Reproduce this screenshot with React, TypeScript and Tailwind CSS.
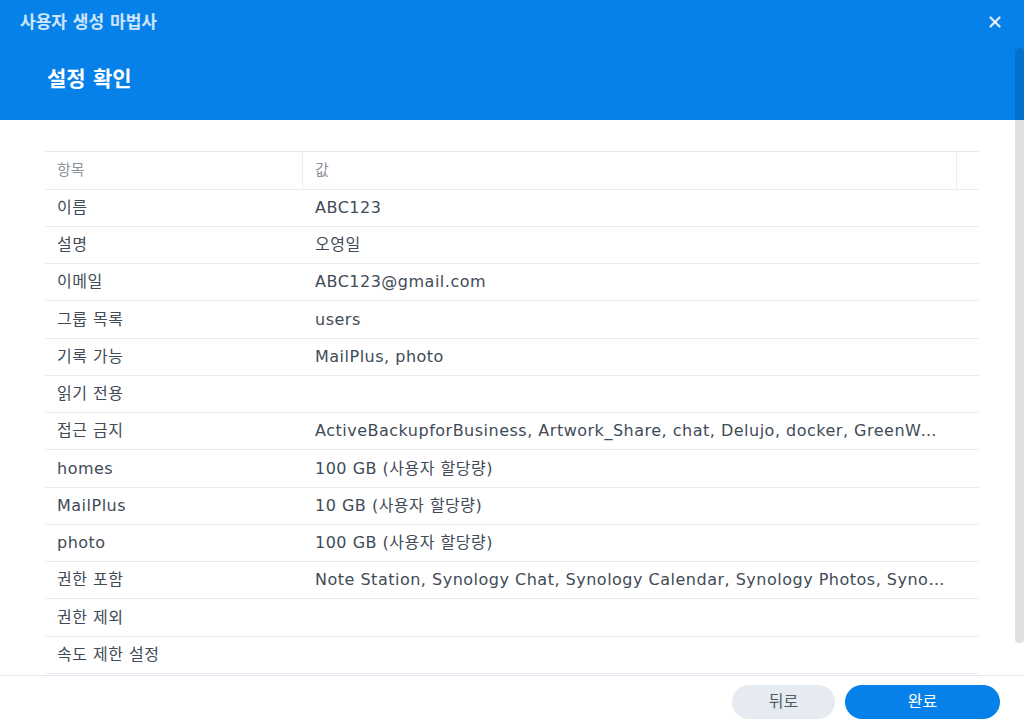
import { X } from "lucide-react";

const rows: [string, string][] = [
  ["이름", "ABC123"],
  ["설명", "오영일"],
  ["이메일", "ABC123@gmail.com"],
  ["그룹 목록", "users"],
  ["기록 가능", "MailPlus, photo"],
  ["읽기 전용", ""],
  ["접근 금지", "ActiveBackupforBusiness, Artwork_Share, chat, Delujo, docker, GreenWorks, homes, music, video, web"],
  ["homes", "100 GB (사용자 할당량)"],
  ["MailPlus", "10 GB (사용자 할당량)"],
  ["photo", "100 GB (사용자 할당량)"],
  ["권한 포함", "Note Station, Synology Chat, Synology Calendar, Synology Photos, Synology Drive"],
  ["권한 제외", ""],
  ["속도 제한 설정", ""],
];

const font = { fontFamily: '"DejaVu Sans", "Noto Sans CJK KR", sans-serif' };

export default function App() {
  return (
    <div className="relative flex h-[728px] w-[1024px] flex-col overflow-hidden bg-white" style={font}>
      {/* header */}
      <div className="relative h-[120px] shrink-0 bg-[#0781ea]">
        <div className="px-5 pt-[11px] text-[17px] font-bold leading-[22px] text-white/80">사용자 생성 마법사</div>
        <div className="px-[47px] pt-[31px] text-[21px] font-bold leading-[30px] text-white">설정 확인</div>
        <button className="absolute right-[20px] top-[13px] text-white/85">
          <X className="size-[18px]" strokeWidth={3} />
        </button>
      </div>

      {/* body */}
      <div className="flex-1 overflow-hidden px-[45px] pt-[31px]">
        <div className="w-[934px] border-t border-[#e3e9f0]">
          <div className="flex h-[38px] border-b border-[#e8edf3] text-[15px] text-[#8b939c]">
            <div className="flex w-[258px] items-center border-r border-[#e8edf3] px-3">항목</div>
            <div className="flex w-[654px] items-center border-r border-[#e8edf3] px-3">값</div>
            <div className="flex-1" />
          </div>
          {rows.map(([k, v], i) => (
            <div
              key={k}
              className={`flex border-b border-[#e8edf3] text-[16px] tracking-[0.5px] text-[#414b57] ${i % 4 === 3 ? "h-[38px]" : "h-[37px]"}`}
            >
              <div className="flex w-[258px] items-center px-3">{k}</div>
              <div className="flex w-[654px] min-w-0 items-center px-3">
                <span className="truncate">{v}</span>
              </div>
            </div>
          ))}
        </div>
      </div>

      {/* footer */}
      <div className="flex h-[53px] shrink-0 items-center justify-end gap-[10px] border-t border-[#e3e9f0] pr-[24px]">
        <button className="h-[34px] w-[103px] rounded-full bg-[#e6ebf2] text-[16px] text-[#555b63]">뒤로</button>
        <button className="h-[34px] w-[155px] rounded-full bg-[#0781ea] text-[16px] text-white">완료</button>
      </div>

      {/* overlay scrollbar */}
      <div className="absolute right-0 top-[48px] h-[595px] w-[9px] rounded-[4px] bg-black/[0.12]" />
    </div>
  );
}
